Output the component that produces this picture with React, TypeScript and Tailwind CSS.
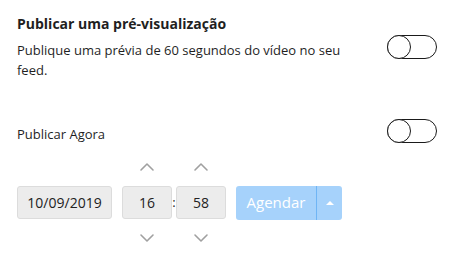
import { ChevronUp, ChevronDown } from 'lucide-react';

function Toggle() {
  return (
    <div className="relative w-[50px] h-[24px] rounded-full border-[1.5px] border-[#1a1a1a] bg-white shrink-0">
      <div className="absolute left-[-1.5px] top-[-1.5px] w-[24px] h-[24px] rounded-full border-[1.5px] border-[#1a1a1a] bg-white" />
    </div>
  );
}

function TimeField({ value }: { value: string }) {
  return (
    <div className="flex flex-col items-center w-[50px]">
      <ChevronUp size={24} strokeWidth={1.6} className="text-[#a0a0a0] mb-[7px]" />
      <div className="w-[50px] h-[33px] flex items-center justify-center rounded-[3px] border border-[#dcdcdc] bg-[#ececec] text-[14px] text-[#222]">
        {value}
      </div>
      <ChevronDown size={24} strokeWidth={1.6} className="text-[#a0a0a0] mt-[7px]" />
    </div>
  );
}

export default function App() {
  return (
    <div className="w-[462px] h-[254px] bg-white px-[17px] pt-[14px] font-['Open_Sans',sans-serif] text-[#1f1f1f]">
      <h2 className="text-[14px] font-bold leading-[20px]">Publicar uma pré-visualização</h2>
      <div className="flex items-start justify-between mt-[6px] pr-[8px]">
        <p className="text-[13px] leading-[20px] w-[340px]">
          Publique uma prévia de 60 segundos do vídeo no seu feed.
        </p>
        <div className="mt-[-5px]">
          <Toggle />
        </div>
      </div>
      <div className="flex items-start justify-between mt-[39px] pr-[8px]">
        <span className="text-[13px] leading-[18px] mt-[6px]">Publicar Agora</span>
        <Toggle />
      </div>
      <div className="flex items-center mt-[12px]">
        <div className="w-[95px] h-[33px] flex items-center justify-center rounded-[3px] border border-[#dcdcdc] bg-[#ececec] text-[14px] text-[#222]">
          10/09/2019
        </div>
        <div className="flex items-center ml-[10px]">
          <TimeField value="16" />
          <span className="w-[4px] text-[13px] text-center">:</span>
          <TimeField value="58" />
        </div>
        <div className="flex ml-[10px] h-[34px] rounded-[3px] bg-[#a6d2fb] text-white">
          <div className="w-[80px] flex items-center justify-center text-[15px]">Agendar</div>
          <div className="w-[1px] bg-[#6fb5f5]" />
          <div className="w-[25px] flex items-center justify-center">
            <div className="w-0 h-0 border-l-[4px] border-r-[4px] border-b-[4px] border-l-transparent border-r-transparent border-b-white" />
          </div>
        </div>
      </div>
    </div>
  );
}
